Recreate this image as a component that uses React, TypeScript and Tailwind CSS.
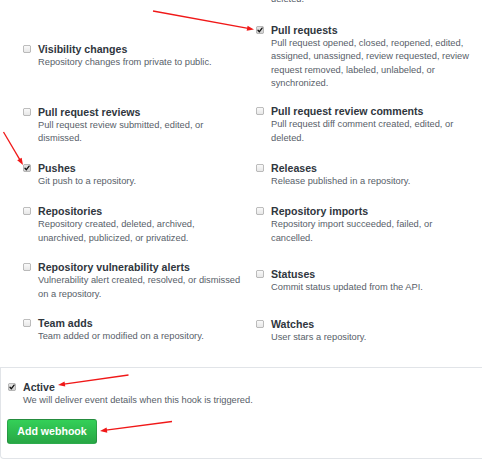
import React from "react";

type Item = { title: string; desc: string; mt: string; checked?: boolean };

const left: Item[] = [
  { title: "Visibility changes", desc: "Repository changes from private to public.", mt: "mt-[42px]" },
  { title: "Pull request reviews", desc: "Pull request review submitted, edited, or dismissed.", mt: "mt-[35px]" },
  { title: "Pushes", desc: "Git push to a repository.", mt: "mt-[15px]", checked: true },
  { title: "Repositories", desc: "Repository created, deleted, archived, unarchived, publicized, or privatized.", mt: "mt-[16px]" },
  { title: "Repository vulnerability alerts", desc: "Vulnerability alert created, resolved, or dismissed on a repository.", mt: "mt-[15px]" },
  { title: "Team adds", desc: "Team added or modified on a repository.", mt: "mt-[15px]" },
];

const right: Item[] = [
  { title: "Pull requests", desc: "Pull request opened, closed, reopened, edited, assigned, unassigned, review requested, review request removed, labeled, unlabeled, or synchronized.", mt: "mt-[16px]", checked: true },
  { title: "Pull request review comments", desc: "Pull request diff comment created, edited, or deleted.", mt: "mt-[13.5px]" },
  { title: "Releases", desc: "Release published in a repository.", mt: "mt-[15.5px]" },
  { title: "Repository imports", desc: "Repository import succeeded, failed, or cancelled.", mt: "mt-[16px]" },
  { title: "Statuses", desc: "Commit status updated from the API.", mt: "mt-[22px]" },
  { title: "Watches", desc: "User stars a repository.", mt: "mt-[22px]" },
];

function Box({ checked }: { checked?: boolean }) {
  return (
    <svg width="8" height="8" viewBox="0 0 8 8" className="block">
      <defs>
        <linearGradient id={checked ? "cbc" : "cbu"} x1="0" y1="0" x2="0" y2="1">
          <stop offset="0" stopColor={checked ? "#e4e4e4" : "#fbfbfb"} />
          <stop offset="1" stopColor={checked ? "#cfcfcf" : "#e6e6e6"} />
        </linearGradient>
      </defs>
      <rect x="0.4" y="0.4" width="7.2" height="7.2" rx="1.5" fill={`url(#${checked ? "cbc" : "cbu"})`} stroke="#a3a3a3" strokeWidth="0.8" />
      {checked && (
        <path d="M2 4.2 L3.4 5.7 L6.1 2.1" fill="none" stroke="#111" strokeWidth="1.3" strokeLinecap="round" strokeLinejoin="round" />
      )}
    </svg>
  );
}

function Event({ item, w }: { item: Item; w: string }) {
  return (
    <div className={`flex ${item.mt}`}>
      <div className="w-[8px] mr-[7px] pt-[3px] shrink-0">
        <Box checked={item.checked} />
      </div>
      <div className={w}>
        <div className="text-[10.6px] leading-[14px] font-bold text-[#2f363d]">{item.title}</div>
        <div className="text-[9.3px] leading-[13.5px] text-[#586069]">{item.desc}</div>
      </div>
    </div>
  );
}

function Arrow({ x1, y1, x2, y2 }: { x1: number; y1: number; x2: number; y2: number }) {
  const dx = x2 - x1;
  const dy = y2 - y1;
  const len = Math.hypot(dx, dy);
  const ux = dx / len;
  const uy = dy / len;
  const nx = -uy;
  const ny = ux;
  const hl = 7;
  const hw = 2.6;
  const bx = x2 - ux * hl;
  const by = y2 - uy * hl;
  const pts = `${x2},${y2} ${bx + nx * hw},${by + ny * hw} ${bx - nx * hw},${by - ny * hw}`;
  return (
    <g>
      <line x1={x1} y1={y1} x2={bx + ux} y2={by + uy} stroke="#f01818" strokeWidth="1.3" />
      <polygon points={pts} fill="#f01818" />
    </g>
  );
}

export default function App() {
  return (
    <div
      className="relative w-[482px] h-[460px] overflow-hidden bg-white"
      style={{ fontFamily: '"Liberation Sans", Arial, sans-serif' }}
    >
      <div className="flex h-[367px]">
        <div className="w-[233px] ml-[23px] flex flex-col">
          {left.map((it) => (
            <Event key={it.title} item={it} w="w-[205px]" />
          ))}
        </div>
        <div className="flex flex-col">
          <div className="pl-[15px] mt-[-7px] text-[9.3px] leading-[13.5px] text-[#586069]">deleted.</div>
          {right.map((it) => (
            <Event key={it.title} item={it} w="w-[202px]" />
          ))}
        </div>
      </div>
      <div className="w-[500px] h-[92px] border-t border-l border-b border-[#e1e4e8] rounded-bl-[4px] pl-[6px] pt-[12px]">
        <div className="flex">
          <div className="w-[8px] ml-[1px] mr-[7px] pt-[3px] shrink-0">
            <Box checked />
          </div>
          <div>
            <div className="text-[10.6px] leading-[14px] font-bold text-[#2f363d]">Active</div>
            <div className="text-[9.3px] leading-[13.5px] text-[#586069]">
              We will deliver event details when this hook is triggered.
            </div>
          </div>
        </div>
        <button className="mt-[11px] w-[90px] h-[25px] rounded-[3px] border border-[rgba(27,31,35,0.2)] bg-gradient-to-b from-[#34d058] to-[#28a745] text-white text-[10.6px] font-bold leading-[23px] flex items-center justify-center">
          Add webhook
        </button>
      </div>
      <svg className="absolute inset-0 pointer-events-none" width="482" height="460">
        <Arrow x1={153} y1={11} x2={254} y2={29.5} />
        <Arrow x1={3.5} y1={132} x2={23} y2={165} />
        <Arrow x1={128.5} y1={375} x2={58} y2={385} />
        <Arrow x1={172} y1={421.5} x2={100} y2={431} />
      </svg>
    </div>
  );
}
